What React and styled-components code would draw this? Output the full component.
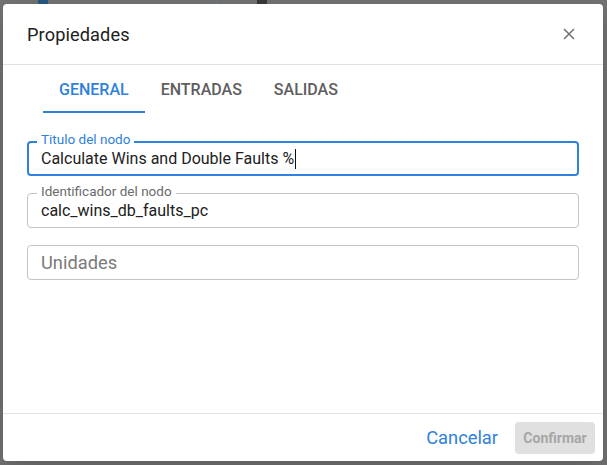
import React from "react";
import styled, { createGlobalStyle } from "styled-components";

const Global = createGlobalStyle`
  html, body { margin: 0; padding: 0; }
  body {
    background: #737373;
    font-family: Roboto, "Liberation Sans", sans-serif;
    width: 607px;
    height: 465px;
    overflow: hidden;
  }
`;

const BLUE = "#2f81dc";

const Page = styled.div`
  position: relative;
  width: 607px;
  height: 465px;
  padding: 4px 4px 4px 3px;
  box-sizing: border-box;
`;

const BackStrip = styled.div`
  position: absolute;
  left: 0;
  top: 0;
  width: 607px;
  height: 4px;
  display: flex;
  align-items: stretch;
  overflow: hidden;
`;

const BackBlock = styled.div`
  width: ${(p) => p.$w}px;
  margin-left: ${(p) => p.$ml || 0}px;
  background: ${(p) => p.$c};
`;

const Dialog = styled.div`
  position: relative;
  width: 600px;
  height: 457px;
  background: #fff;
  border-radius: 4px;
  display: flex;
  flex-direction: column;
  box-shadow: 0 10px 30px rgba(0,0,0,0.2);
`;

const Header = styled.div`
  height: 60px;
  padding: 0 24px;
  display: flex;
  align-items: center;
  justify-content: space-between;
  border-bottom: 1px solid #e2e2e2;
`;

const Title = styled.h2`
  margin: 0;
  font-size: 18.2px;
  font-weight: 400;
  color: #212121;
  letter-spacing: 0.1px;
`;

const CloseBtn = styled.button`
  border: 0;
  background: none;
  padding: 0;
  width: 20px;
  height: 20px;
  display: flex;
  align-items: center;
  justify-content: center;
  cursor: pointer;
`;

const Tabs = styled.div`
  display: flex;
  padding-left: 40px;
  height: 48px;
`;

const Tab = styled.div`
  position: relative;
  padding: 0 16px;
  display: flex;
  align-items: center;
  font-size: 16px;
  font-weight: 500;
  text-transform: uppercase;
  color: ${(p) => (p.$active ? BLUE : "#5e5e5e")};
  &::after {
    content: "";
    display: ${(p) => (p.$active ? "block" : "none")};
    position: absolute;
    left: 0;
    right: 0;
    bottom: 0;
    height: 2px;
    background: ${BLUE};
  }
`;

const Content = styled.div`
  flex: 1;
  padding: 28px 24px 0;
  display: flex;
  flex-direction: column;
  gap: 17px;
`;

const Field = styled.div`
  position: relative;
  height: 35px;
  box-sizing: border-box;
  border: ${(p) => (p.$focused ? `2px solid ${BLUE}` : "1px solid #c4c4c4")};
  border-radius: 4px;
  padding: 0 ${(p) => (p.$focused ? 12 : 13)}px;
  display: flex;
  align-items: center;
`;

const Label = styled.span`
  position: absolute;
  left: ${(p) => (p.$focused ? 8 : 9)}px;
  top: ${(p) => (p.$focused ? -11 : -10)}px;
  padding: 0 4px;
  background: #fff;
  font-size: 13.5px;
  line-height: 15px;
  color: ${(p) => (p.$focused ? BLUE : "#6b6b6b")};
`;

const Value = styled.span`
  font-size: 16px;
  color: #212121;
  display: flex;
  align-items: center;
`;

const Placeholder = styled.span`
  font-size: 18.3px;
  color: #7a7a7a;
`;

const Caret = styled.span`
  display: inline-block;
  width: 1px;
  height: 20px;
  background: #111;
  margin-left: 1px;
`;

const Footer = styled.div`
  height: 47px;
  border-top: 1px solid #e2e2e2;
  display: flex;
  align-items: center;
  justify-content: flex-end;
  padding: 0 8px;
  gap: 9px;
`;

const TextButton = styled.button`
  border: 0;
  background: none;
  font-family: inherit;
  font-size: 18.3px;
  color: ${BLUE};
  padding: 0 8px;
  height: 32px;
  cursor: pointer;
`;

const SolidButton = styled.button`
  border: 0;
  border-radius: 4px;
  background: #e0e0e0;
  color: #a6a6a6;
  font-family: inherit;
  font-size: 14px;
  font-weight: 700;
  height: 32px;
  width: 80px;
  padding: 0;
`;

export default function App() {
  return (
    <>
      <Global />
      <Page>
        <BackStrip>
          <BackBlock $w={10} $ml={38} $c="#255a86" />
          <BackBlock $w={1} $ml={168} $c="#5c7fa0" />
          <BackBlock $w={10} $ml={40} $c="#3a3a3a" />
        </BackStrip>
        <Dialog>
          <Header>
            <Title>Propiedades</Title>
            <CloseBtn aria-label="Cerrar">
              <svg width="12" height="12" viewBox="0 0 12 12">
                <path d="M1 1 L11 11 M11 1 L1 11" stroke="#707070" strokeWidth="1.5" />
              </svg>
            </CloseBtn>
          </Header>
          <Tabs>
            <Tab $active>General</Tab>
            <Tab>Entradas</Tab>
            <Tab>Salidas</Tab>
          </Tabs>
          <Content>
            <Field $focused>
              <Label $focused>Titulo del nodo</Label>
              <Value>
                Calculate Wins and Double Faults %<Caret />
              </Value>
            </Field>
            <Field>
              <Label>Identificador del nodo</Label>
              <Value>calc_wins_db_faults_pc</Value>
            </Field>
            <Field>
              <Placeholder>Unidades</Placeholder>
            </Field>
          </Content>
          <Footer>
            <TextButton>Cancelar</TextButton>
            <SolidButton disabled>Confirmar</SolidButton>
          </Footer>
        </Dialog>
      </Page>
    </>
  );
}
